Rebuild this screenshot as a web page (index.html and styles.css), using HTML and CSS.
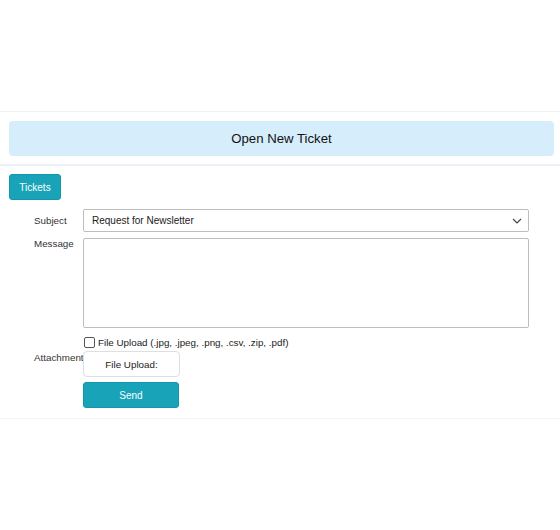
FILE: index.html
```html
<!DOCTYPE html>
<html>
<head>
<meta charset="utf-8">
<link rel="stylesheet" href="styles.css">
</head>
<body>
<div class="top"></div>
<div class="header-wrap">
  <div class="header">Open New Ticket</div>
</div>
<div class="content">
  <button class="btn tickets">Tickets</button>
  <form class="form">
    <div class="row">
      <label class="lbl subj">Subject</label>
      <div class="select">
        <span>Request for Newsletter</span>
        <svg width="10" height="6" viewBox="0 0 10 6"><path d="M1 1l4 4 4-4" fill="none" stroke="#444" stroke-width="1.2"/></svg>
      </div>
    </div>
    <div class="row">
      <label class="lbl msg">Message</label>
      <div class="textarea"></div>
    </div>
    <div class="row checkrow">
      <div class="lbl"></div>
      <label class="check"><span class="box"></span>File Upload (.jpg, .jpeg, .png, .csv, .zip, .pdf)</label>
    </div>
    <div class="row attach">
      <label class="lbl">Attachment</label>
      <div class="upload">File Upload:</div>
    </div>
    <div class="row sendrow">
      <div class="lbl"></div>
      <button class="btn send" type="button">Send</button>
    </div>
  </form>
</div>
<div class="bottom"></div>
</body>
</html>
```

FILE: styles.css
```css
* { box-sizing: border-box; }
body {
  margin: 0;
  background: #fff;
  font-family: "Liberation Sans", Arial, sans-serif;
  color: #222;
}
.top {
  height: 112px;
  border-bottom: 1px solid #eef1f6;
}
.header-wrap {
  padding: 9px 6px 8px 9px;
  border-bottom: 2px solid #edf1f7;
}
.header {
  height: 35px;
  background: #d6edfc;
  border-radius: 4px;
  display: flex;
  align-items: center;
  justify-content: center;
  font-size: 13.2px;
  color: #111;
}
.content {
  padding: 8px 0 10px 9px;
  border-bottom: 1px solid #f4f4f4;
}
.btn {
  background: #18a3b9;
  color: #fff;
  border: 1px solid #1597ab;
  border-radius: 3px;
  font-family: "Liberation Sans", Arial, sans-serif;
  font-size: 10px;
  cursor: pointer;
}
.tickets {
  width: 52px;
  height: 26px;
  padding: 0;
  display: block;
}
.form {
  margin-top: 9px;
  display: flex;
  flex-direction: column;
}
.row {
  display: flex;
}
.row + .row { margin-top: 6px; }
.lbl {
  width: 74px;
  padding-left: 25px;
  font-size: 9.8px;
  color: #333;
  white-space: nowrap;
}
.lbl.subj {
  display: flex;
  align-items: center;
}
.lbl.msg { padding-top: 0; }
.select {
  width: 446px;
  height: 23px;
  border: 1px solid #bdbdbd;
  border-radius: 2px;
  display: flex;
  align-items: center;
  justify-content: space-between;
  padding: 0 6px 0 8px;
  font-size: 10px;
  color: #222;
}
.textarea {
  width: 446px;
  height: 90px;
  border: 1px solid #bdbdbd;
  border-radius: 2px;
}
.row.checkrow { margin-top: 9px; }
.check {
  display: flex;
  align-items: center;
  gap: 3px;
  font-size: 9.8px;
  color: #222;
  margin-left: 1px;
}
.box {
  width: 11px;
  height: 11px;
  border: 1px solid #555;
  border-radius: 2px;
}
.row.attach { margin-top: 3px; }
.attach .lbl { padding-top: 1px; }
.upload {
  width: 97px;
  height: 26px;
  border: 1px solid #dcdfe4;
  border-radius: 4px;
  display: flex;
  align-items: center;
  justify-content: center;
  font-size: 9.8px;
  color: #222;
}
.row.sendrow { margin-top: 5px; }
.send {
  width: 96px;
  height: 26px;
  padding: 0;
}
```
